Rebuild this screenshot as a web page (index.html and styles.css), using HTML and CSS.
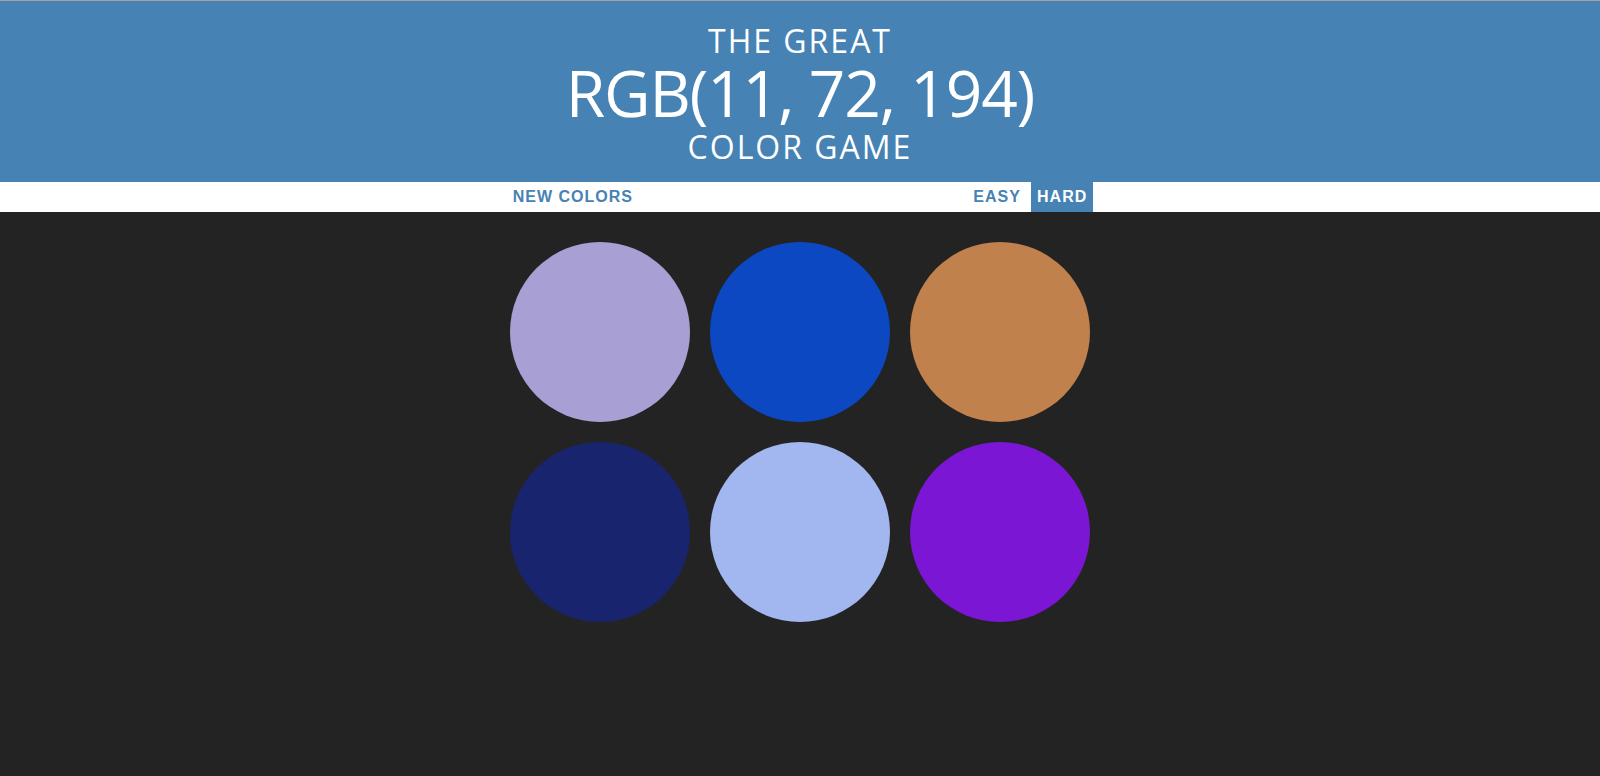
FILE: index.html
```html
<!DOCTYPE html>
<html lang="en">
<head>
<meta charset="utf-8">
<title>Color Game</title>
<link rel="stylesheet" href="styles.css">
</head>
<body>
<h1 class="title">The Great<br><span class="color-display">RGB(11, 72, 194)</span><br>Color Game</h1>
<div class="stripe">
  <button class="btn">New Colors</button>
  <span class="message"></span>
  <button class="btn">Easy</button>
  <button class="btn selected">Hard</button>
</div>
<div class="board">
  <div class="square sq1"></div>
  <div class="square sq2"></div>
  <div class="square sq3"></div>
  <div class="square sq4"></div>
  <div class="square sq5"></div>
  <div class="square sq6"></div>
</div>
</body>
</html>
```
FILE: styles.css
```css
html, body {
  margin: 0;
  padding: 0;
}
body {
  background-color: #232323;
  font-family: "Open Sans", "Liberation Sans", sans-serif;
  border-top: 1px solid #a3a3a3;
}
.title {
  margin: 0;
  padding: 22px 0 18px;
  background: #4682b4;
  color: #ffffff;
  text-align: center;
  text-transform: uppercase;
  font-weight: 400;
  font-size: 32px;
  line-height: 1.1;
  letter-spacing: 2px;
}
.color-display {
  font-size: 200%;
  letter-spacing: -1.2px;
}
.stripe {
  background: #ffffff;
  height: 30px;
  text-align: center;
  font-size: 16px;
  white-space: nowrap;
}
.message {
  display: inline-block;
  width: 20%;
}
.btn {
  border: none;
  background: none;
  margin: 0;
  padding: 1px 6px;
  height: 100%;
  font-family: "Liberation Sans", Arial, sans-serif;
  font-size: 16px;
  font-weight: 700;
  letter-spacing: 1px;
  text-transform: uppercase;
  color: #4682b4;
  vertical-align: top;
}
.btn.selected {
  background: #4682b4;
  color: #ffffff;
}
.board {
  width: 600px;
  margin: 20px auto;
  padding: 10px;
  box-sizing: border-box;
  display: grid;
  grid-template-columns: repeat(3, 180px);
  grid-auto-rows: 180px;
  gap: 20px;
}
.square {
  border-radius: 50%;
}
.sq1 { background: #a89fd4; }
.sq2 { background: #0b48c2; }
.sq3 { background: #c0814d; }
.sq4 { background: #19246e; }
.sq5 { background: #a2b6ef; }
.sq6 { background: #7b16d4; }
```
